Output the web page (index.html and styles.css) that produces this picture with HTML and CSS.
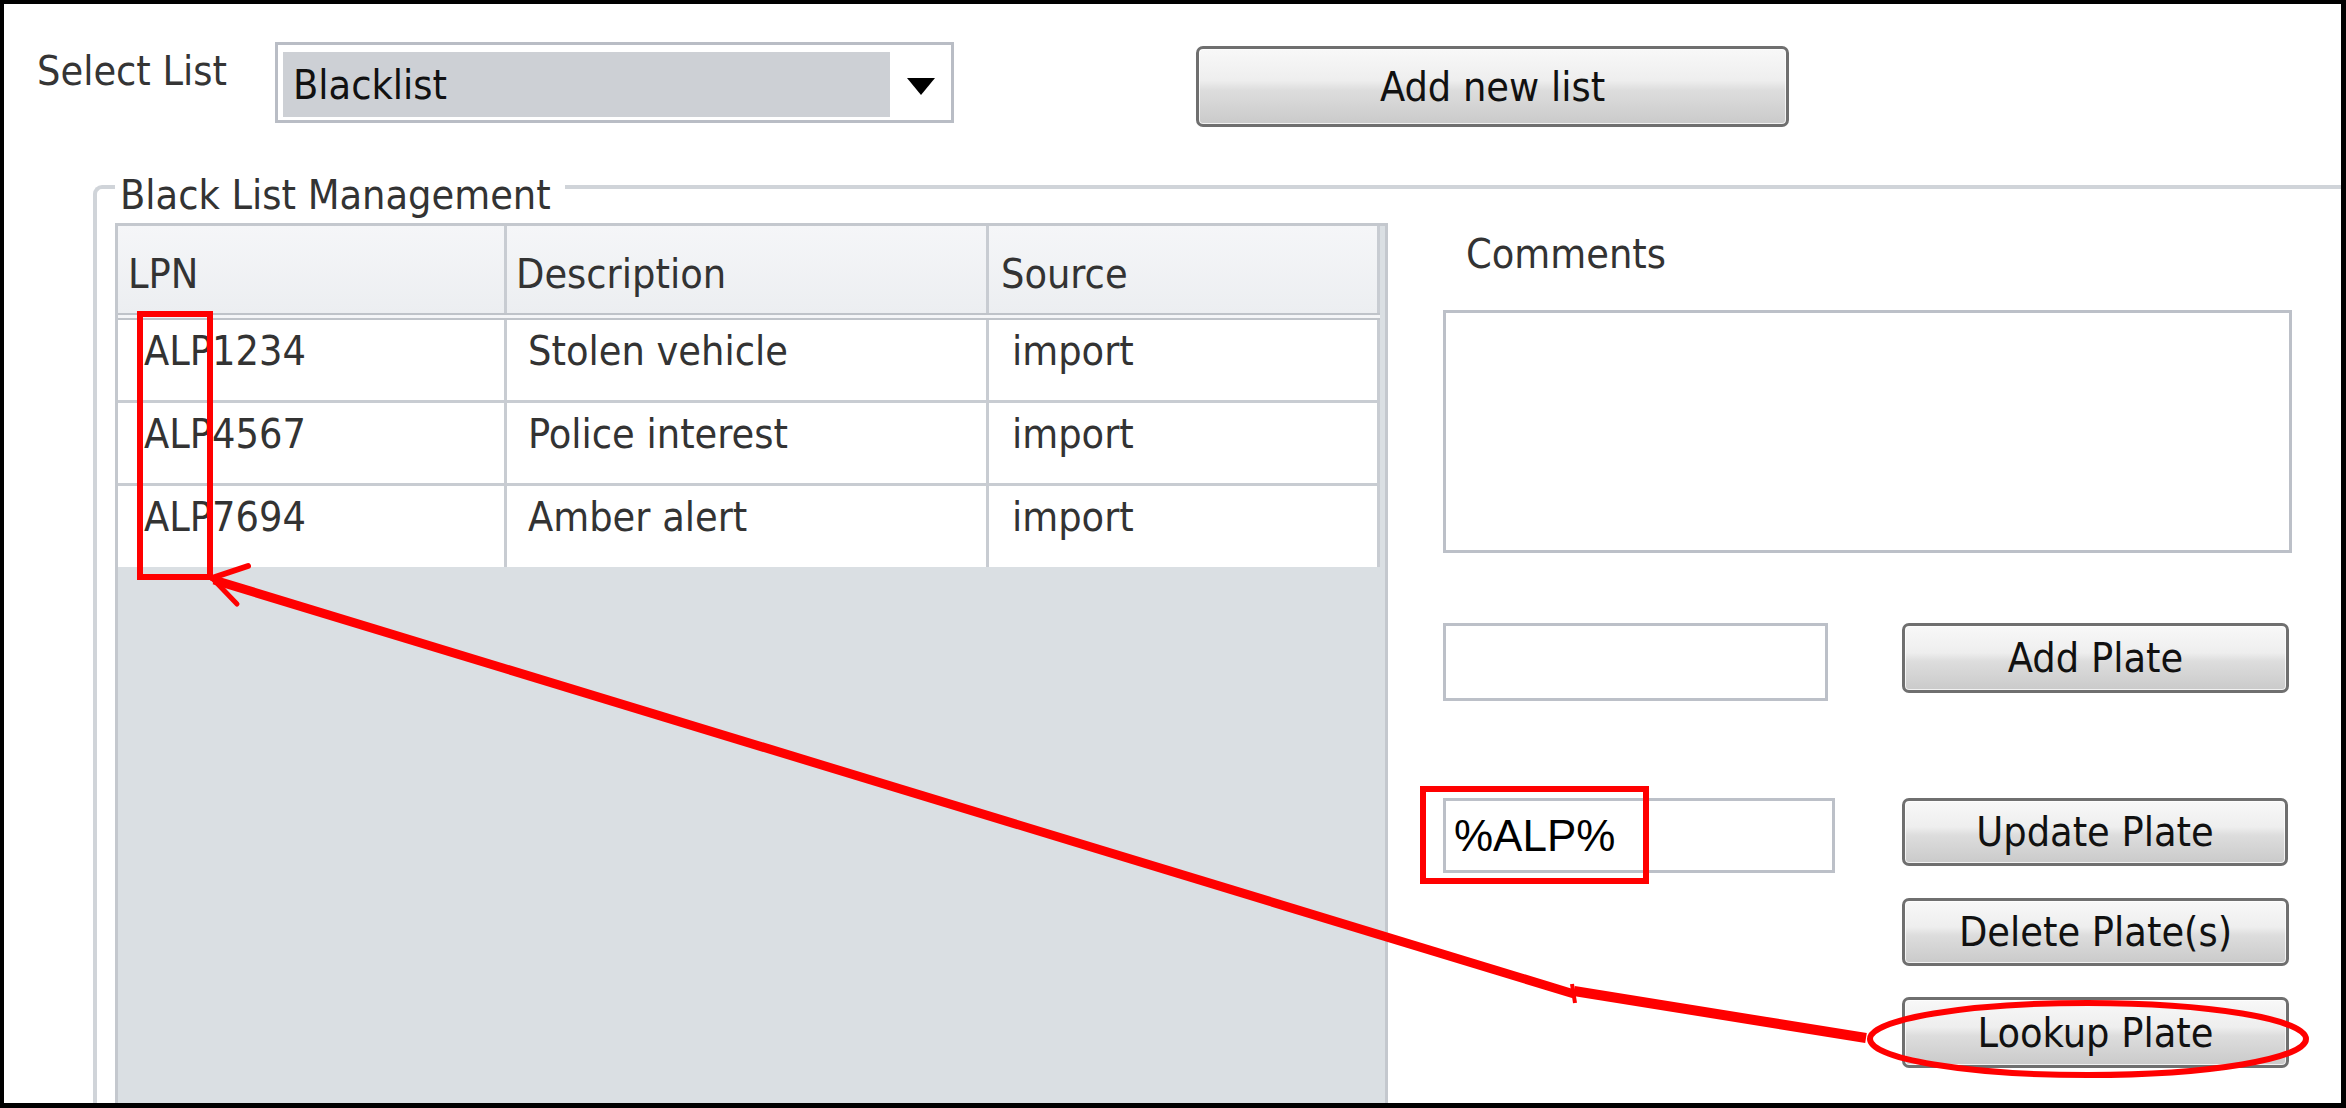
FILE: index.html
```html
<!DOCTYPE html>
<html>
<head>
<meta charset="utf-8">
<title>Black List Management</title>
<link rel="stylesheet" href="styles.css">
</head>
<body>
<div class="frame">
  <div class="toprow">
    <span class="lbl">Select List</span>
    <div class="select">
      <div class="sel-val">Blacklist</div>
      <div class="sel-arrow"><span class="tri"></span></div>
    </div>
    <button class="btn btn-addlist">Add new list</button>
  </div>

  <fieldset class="mgmt">
    <legend class="mgmt-legend">Black List Management</legend>
    <div class="mgmt-body">
      <div class="grid">
        <div class="row head">
          <div class="c c1">LPN</div>
          <div class="c c2">Description</div>
          <div class="c c3">Source</div>
        </div>
        <div class="row">
          <div class="c c1">ALP1234</div>
          <div class="c c2">Stolen vehicle</div>
          <div class="c c3">import</div>
        </div>
        <div class="row">
          <div class="c c1">ALP4567</div>
          <div class="c c2">Police interest</div>
          <div class="c c3">import</div>
        </div>
        <div class="row last">
          <div class="c c1">ALP7694</div>
          <div class="c c2">Amber alert</div>
          <div class="c c3">import</div>
        </div>
      </div>

      <div class="side">
        <div class="cm-label">Comments</div>
        <div class="textarea"></div>
        <div class="prow prow-a">
          <div class="cell-l"><div class="inp inp-a"></div></div>
          <button class="btn btn-side btn-add">Add Plate</button>
        </div>
        <div class="prow prow-b">
          <div class="cell-l"><div class="inp inp-b">%ALP%</div></div>
          <button class="btn btn-side btn-upd">Update Plate</button>
        </div>
        <div class="prow prow-c">
          <div class="cell-l"></div>
          <button class="btn btn-side btn-del">Delete Plate(s)</button>
        </div>
        <div class="prow prow-d">
          <div class="cell-l"></div>
          <button class="btn btn-side btn-look">Lookup Plate</button>
        </div>
      </div>
    </div>
  </fieldset>

  <svg class="notes" width="2346" height="1108" viewBox="0 0 2346 1108">
    <rect x="140" y="314" width="70" height="263" fill="none" stroke="#ff0000" stroke-width="6"/>
    <rect x="1423" y="789" width="223" height="92" fill="none" stroke="#ff0000" stroke-width="6"/>
    <ellipse cx="2088" cy="1039" rx="218" ry="36" fill="none" stroke="#ff0000" stroke-width="6"/>
    <line x1="1866" y1="1038" x2="1574" y2="991" stroke="#ff0000" stroke-width="10"/>
    <line x1="1574" y1="994" x2="214" y2="580" stroke="#ff0000" stroke-width="9"/>
    <line x1="1572" y1="984" x2="1575" y2="1003" stroke="#ff0000" stroke-width="4"/>
    <line x1="212" y1="578" x2="248" y2="566" stroke="#ff0000" stroke-width="6" stroke-linecap="round"/>
    <line x1="212" y1="578" x2="237" y2="604" stroke="#ff0000" stroke-width="5" stroke-linecap="round"/>
  </svg>
</div>
</body>
</html>
```
FILE: styles.css
```css
html, body {
  margin: 0;
  padding: 0;
  background: #ffffff;
}

.frame {
  position: relative;
  width: 2346px;
  height: 1108px;
  box-sizing: border-box;
  border: 4px solid #000;
  border-right-width: 5px;
  border-bottom-width: 5px;
  background: #fff;
  overflow: hidden;
  font-family: "DejaVu Sans Condensed", "DejaVu Sans", sans-serif;
  font-stretch: condensed;
  font-size: 41px;
  color: #333;
}

/* ---------- top row ---------- */
.toprow {
  display: flex;
  align-items: flex-start;
  padding-top: 38px;
}

.lbl {
  display: block;
  width: 238px;
  margin-left: 33px;
  margin-top: 5px;
  line-height: 48px;
  color: #353535;
}

.select {
  display: flex;
  width: 679px;
  height: 81px;
  box-sizing: border-box;
  border: 3px solid #b9bdc5;
  padding: 7px 0 3px 5px;
  background: #fff;
}

.sel-val {
  width: 607px;
  height: 65px;
  box-sizing: border-box;
  padding: 2px 0 0 10px;
  line-height: 63px;
  background: #cdd0d5;
  color: #111;
}

.sel-arrow {
  flex: 1;
  display: flex;
  align-items: center;
  justify-content: center;
  padding-top: 4px;
}

.tri {
  width: 0;
  height: 0;
  border-left: 14px solid transparent;
  border-right: 14px solid transparent;
  border-top: 17px solid #000;
}

/* ---------- buttons ---------- */
.btn {
  box-sizing: border-box;
  margin: 0;
  padding: 0;
  border: 3px solid #6f6f6f;
  border-radius: 7px;
  background: linear-gradient(to bottom, #f8f8f8 0%, #eeeeee 42%, #dddddd 55%, #cacaca 100%);
  box-shadow: inset 0 0 0 1px rgba(255, 255, 255, 0.75);
  font-family: "DejaVu Sans Condensed", "DejaVu Sans", sans-serif;
  font-stretch: condensed;
  font-size: 41px;
  line-height: 48px;
  color: #111;
  text-align: center;
}

.btn-addlist {
  width: 593px;
  height: 81px;
  margin-left: 242px;
  margin-top: 4px;
}

/* ---------- fieldset ---------- */
.mgmt {
  margin: 28px 0 0 89px;
  padding: 4px 0 0 18px;
  width: 2400px;
  border: 4px solid #d0d4d9;
  border-right: none;
  border-bottom: none;
  border-radius: 9px 0 0 0;
  min-inline-size: 0;
}

.mgmt-legend {
  padding: 16px 14px 0 5px;
  margin: 0;
  line-height: 48px;
  color: #333;
}

.mgmt-body {
  display: flex;
  align-items: flex-start;
}

/* ---------- grid ---------- */
.grid {
  width: 1273px;
  height: 900px;
  box-sizing: border-box;
  border: 3px solid #c4c8ce;
  border-bottom: none;
  padding-right: 5px;
  background: #dadfe3;
}

.row {
  display: flex;
  height: 83px;
  box-sizing: border-box;
  border-bottom: 3px solid #c8ccd2;
  background: #fff;
}

.row.last {
  height: 81px;
  border-bottom: none;
}

.row.head {
  height: 94px;
  border-bottom: 7px double #bfc3c9;
  background: linear-gradient(to bottom, #f5f6f8 0%, #eceef1 100%);
}

.c {
  box-sizing: border-box;
  height: 100%;
  border-right: 3px solid #c8ccd2;
  line-height: 48px;
  padding-top: 7px;
  white-space: nowrap;
  color: #333;
}

.c1 { width: 389px; padding-left: 26px; }
.c2 { width: 482px; padding-left: 21px; }
.c3 { width: 391px; padding-left: 23px; }

.head .c { padding-top: 24px; }
.head .c1 { padding-left: 10px; }
.head .c2 { padding-left: 9px; }
.head .c3 { padding-left: 12px; }

/* ---------- side panel ---------- */
.side {
  display: flex;
  flex-direction: column;
  padding-left: 55px;
}

.cm-label {
  margin-top: 7px;
  padding-left: 23px;
  line-height: 48px;
  color: #333;
}

.textarea {
  margin-top: 32px;
  width: 849px;
  height: 243px;
  box-sizing: border-box;
  border: 3px solid #bcc0c8;
  background: #fff;
}

.prow {
  display: flex;
  align-items: flex-start;
}

.cell-l {
  width: 459px;
}

.inp {
  box-sizing: border-box;
  border: 3px solid #bcc0c8;
  background: #fff;
}

.inp-a { width: 385px; height: 78px; }

.inp-b {
  width: 392px;
  height: 75px;
  padding-left: 8px;
  font-family: "Liberation Sans", Arial, sans-serif;
  font-stretch: normal;
  font-size: 44px;
  line-height: 69px;
  color: #000;
}

.btn-side { width: 387px; }

.prow-a { margin-top: 70px; }
.prow-a .btn { height: 70px; }

.prow-b { margin-top: 97px; }
.prow-b .btn { height: 68px; width: 386px; }

.prow-c { margin-top: 25px; }
.prow-c .btn { height: 68px; }

.prow-d { margin-top: 31px; }
.prow-d .btn { height: 71px; }

/* ---------- annotations overlay ---------- */
.notes {
  position: absolute;
  top: -4px;
  left: -4px;
  pointer-events: none;
}
```
